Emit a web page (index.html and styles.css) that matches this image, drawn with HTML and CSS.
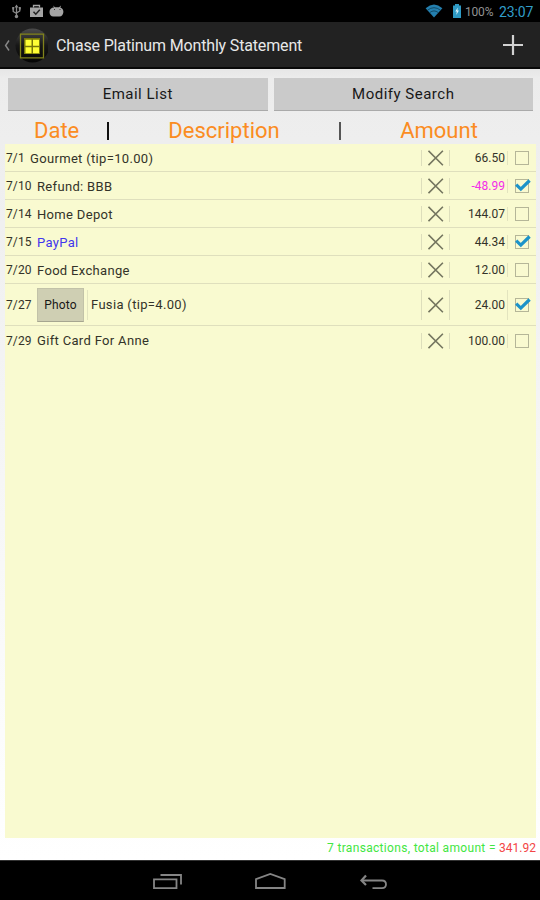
FILE: index.html
```html
<!DOCTYPE html>
<html lang="en">
<head>
  <meta charset="UTF-8">
  <title>Chase Platinum Monthly Statement</title>
  <meta name="viewport" content="width=device-width,initial-scale=1">
  <link rel="stylesheet" href="styles.css">
</head>
<body>
  <svg class="defs" width="0" height="0">
    <symbol id="cross" viewBox="0 0 16 16"><path d="M.5.800l14.400 14.400M14.900.800L.5 15.200" fill="none" stroke="#74755f" stroke-width="1.600"/></symbol>
    <symbol id="check" viewBox="0 0 18 16"><path d="M2.200 6.700L6.800 11.100L15.600 2.500" fill="none" stroke="#1c93c9" stroke-width="3.200"/></symbol>
  </svg>
  <div class="status">
    <svg class="notify" width="64" height="22" viewBox="0 0 64 22">
      <g fill="none" stroke="#8b8b8b" stroke-width="1.3"><path d="M16.5 6v10M13.2 8.5v3l3.3 2M19.8 8v3l-3.3 2"/></g>
      <g fill="#8b8b8b"><path d="M14.5 7.5l2-3 2 3zM12.2 7h2v2.500h-2zM18.800 7h2v2.500h-2z"/><circle cx="16.500" cy="16.500" r="1.700"/></g>
      <path d="M30 7.500h13v9.500h-13z" fill="#a5a5a5"/>
      <path d="M33.500 7.500v-2h6v2" fill="none" stroke="#a5a5a5" stroke-width="1.300"/>
      <path d="M33.500 11.800l2.300 2.400 4-4.400" fill="none" stroke="#222" stroke-width="1.500"/>
      <path d="M49.500 12c0-3 2-4.500 4.500-4.500l-1-2 2 1.800h4l2-1.800-.6 2.200c2 .6 3 2 3 4.300-.3 2.500-1.500 4.500-4 4.500h-6c-2.500 0-3.900-2-3.900-4.500z" fill="#a5a5a5"/>
      <path d="M54 9.500h1M59.500 9.500h1" stroke="#333"/>
    </svg>
    <svg class="wifi" width="18" height="14" viewBox="0 0 18 14">
      <path d="M.6 4.200Q9-3 17.400 4.200L9 13.500z" fill="#247fae"/>
      <path d="M2.500 6.200q6.500-5 13 0M4.700 8.600q4.300-3.400 8.600 0" fill="none" stroke="#0d3b52" stroke-width=".8"/>
    </svg>
    <svg class="battery" width="10" height="14" viewBox="0 0 10 14">
      <path d="M1 1.500h2V0h4v1.500h2V14H1z" fill="#2f9ac4"/>
      <path d="M5.800 3.500L3.300 7.500h1.500L4.300 11l2.600-4.500H5.400z" fill="#dff4fb"/>
    </svg>
    <span class="percent">100%</span>
    <span class="clock">23:07</span>
  </div>
  <header class="bar">
    <svg width="48" height="46" viewBox="0 0 48 46">
      <defs><linearGradient id="ball" x2="0" y2="1"><stop offset="0" stop-color="#4b4b4b"/><stop offset=".5" stop-color="#171717"/><stop offset="1" stop-color="#050505"/></linearGradient></defs>
      <path d="M9 18.500L5.600 23.500L9 28.500" fill="none" stroke="#858585" stroke-width="1.500"/>
      <circle cx="32.500" cy="23.500" r="17" fill="url(#ball)"/>
      <path d="M20.500 12.200h23v23.600h-23z" fill="none" stroke="#81831b" stroke-width="1.300"/>
      <path d="M24 16h16v16h-16z" fill="#777709"/>
      <path d="M25.500 17.700h6v6h-6zM33 17.700h6v6h-6zM25.500 25.200h6v6h-6zM33 25.200h6v6h-6z" fill="#ffff35"/>
    </svg>
    <h1>Chase Platinum Monthly Statement</h1>
    <svg class="add" width="20" height="20" viewBox="0 0 20 20"><path d="M10 0v20M0 10h20" stroke="#d2d2d2" stroke-width="2.200"/></svg>
  </header>
  <main>
    <div class="buttons">
      <button>Email List</button>
      <button>Modify Search</button>
    </div>
    <div class="heads">
      <span class="h-date">Date</span><i></i><span class="h-desc">Description</span><i class="thin"></i><span class="h-amount">Amount</span>
    </div>
    <div class="list">
      <div class="row">
        <span class="date short">7/1</span><span class="desc">Gourmet (tip=10.00)</span>
        <span class="del"><svg width="16" height="16"><use href="#cross"/></svg></span><span class="amount">66.50</span><span class="box"></span>
      </div>
      <div class="row">
        <span class="date">7/10</span><span class="desc">Refund: BBB</span>
        <span class="del"><svg width="16" height="16"><use href="#cross"/></svg></span><span class="amount neg">-48.99</span><span class="box"><svg width="18" height="16"><use href="#check"/></svg></span>
      </div>
      <div class="row">
        <span class="date">7/14</span><span class="desc">Home Depot</span>
        <span class="del"><svg width="16" height="16"><use href="#cross"/></svg></span><span class="amount">144.07</span><span class="box"></span>
      </div>
      <div class="row">
        <span class="date">7/15</span><span class="desc link">PayPal</span>
        <span class="del"><svg width="16" height="16"><use href="#cross"/></svg></span><span class="amount">44.34</span><span class="box"><svg width="18" height="16"><use href="#check"/></svg></span>
      </div>
      <div class="row">
        <span class="date">7/20</span><span class="desc">Food Exchange</span>
        <span class="del"><svg width="16" height="16"><use href="#cross"/></svg></span><span class="amount">12.00</span><span class="box"></span>
      </div>
      <div class="row tall">
        <span class="date">7/27</span><button class="photo">Photo</button><span class="desc fusia">Fusia (tip=4.00)</span>
        <span class="del"><svg width="16" height="16"><use href="#cross"/></svg></span><span class="amount">24.00</span><span class="box"><svg width="18" height="16"><use href="#check"/></svg></span>
      </div>
      <div class="row">
        <span class="date">7/29</span><span class="desc">Gift Card For Anne</span>
        <span class="del"><svg width="16" height="16"><use href="#cross"/></svg></span><span class="amount">100.00</span><span class="box"></span>
      </div>
    </div>
    <p class="total">7 transactions, total amount = <b>341.92</b></p>
  </main>
  <nav>
    <svg width="540" height="39" viewBox="0 0 540 39" fill="none" stroke="#858585" stroke-width="1.800">
      <path d="M154 18.300h22.500v8.800H154zM160.500 14h20.500v9.500"/>
      <path d="M256 27V18.200L270.300 13 284.700 18.200V27z"/>
      <path d="M363 19.500h19q4 0 4 3.800t-4 3.800h-9.500" /><path d="M366 14.500L361.500 19.500l4.500 4.500" stroke-width="2.200"/>
    </svg>
  </nav>
</body>
</html>
```
FILE: styles.css
```css
* { box-sizing: border-box; }
body { margin: 0; height: 900px; background: #000; font-family: Roboto, "Noto Sans", sans-serif; display: flex; flex-direction: column; overflow: hidden; }
.defs { position: absolute; }
.status { height: 22px; display: flex; align-items: center; padding-right: 6px; }
.notify { margin-right: auto; }
.wifi { margin-right: 9px; }
.battery { margin-right: 3px; }
.percent { width: 29px; margin-right: 5px; font-size: 12px; color: #929292; letter-spacing: -0.2px; padding-top: 1px; }
.clock { width: 35px; font-size: 14px; color: #319dc9; letter-spacing: -0.1px; padding-top: 1px; }
.bar { height: 47px; background: #222; border-bottom: 2px solid #080808; display: flex; align-items: center; padding-right: 17px; }
h1 { margin: 0 auto 0 8px; padding-top: 2px; font-size: 16px; font-weight: 400; letter-spacing: -0.16px; color: #e8e8e8; white-space: nowrap; }
main { height: 791px; display: flex; flex-direction: column; padding: 9px 3px 0 5px; background: linear-gradient(#e6e6e6, #ececec 9px, #eee 70px, #fff); }
.buttons { display: flex; gap: 6px; padding: 0 4px 0 3px; }
button { font-family: inherit; color: #181818; background: #cacaca; border: 0; border-bottom: 1px solid #aaa; padding: 0; }
.buttons button { flex: 1; height: 33px; font-size: 15px; letter-spacing: 0.5px; }
.heads { height: 33px; padding-top: 7px; display: flex; align-items: center; font-size: 22px; line-height: 26px; color: #fb8c22; }
.heads i { width: 2px; height: 18px; background: #111; }
.heads .thin { background: #555; }
.h-date { width: 102px; padding-left: 29px; }
.h-desc { width: 230px; text-align: center; }
.h-amount { flex: 1; text-align: center; }
.list { height: 694px; background: #f9fad0; margin-right: 1px; }
.row { height: 28px; padding-top: 1px; display: flex; align-items: center; border-bottom: 1px solid #dfdfbd; font-size: 13px; color: #333329; }
.row:last-child { border: 0; }
.tall { height: 42px; }
.date { width: 32px; font-size: 12px; letter-spacing: 0.1px; padding-left: 1px; }
.date.short { width: 25px; }
.desc { flex: 1; letter-spacing: 0.33px; }
.photo { width: 47px; height: 34px; font-size: 12px; letter-spacing: 0.2px; background: #cfcfb3; border: 1px solid #c2c2a8; border-bottom-color: #a6a690; }
.fusia { margin-left: 3px; padding-left: 3px; border-left: 1px solid #e3e4bf; }
.link { color: #4137ed; }
.del { width: 29px; height: 16px; display: flex; justify-content: center; border: solid #dddebb; border-width: 0 1px; }
.amount { width: 58px; padding-right: 2px; text-align: right; font-size: 12px; letter-spacing: 0; border-right: 1px solid #e3e4bf; }
.tall .del { height: 30px; align-items: center; }
.tall .amount, .tall .fusia { line-height: 30px; }
.neg { color: #f32ee8; }
.box { width: 14px; height: 14px; margin: 0 7px; border: 1px solid #b5b698; }
.box svg { display: block; margin: -2px 0 0 -2px; overflow: visible; }
.total { margin: 1px 1px 0; padding-top: 1px; text-align: right; font-size: 12px; line-height: 17px; letter-spacing: 0.32px; color: #42e642; }
.total b { font-weight: 400; letter-spacing: 0; color: #f34545; }
nav { height: 40px; border-top: 1px solid #333; }
nav svg { display: block; }
```
